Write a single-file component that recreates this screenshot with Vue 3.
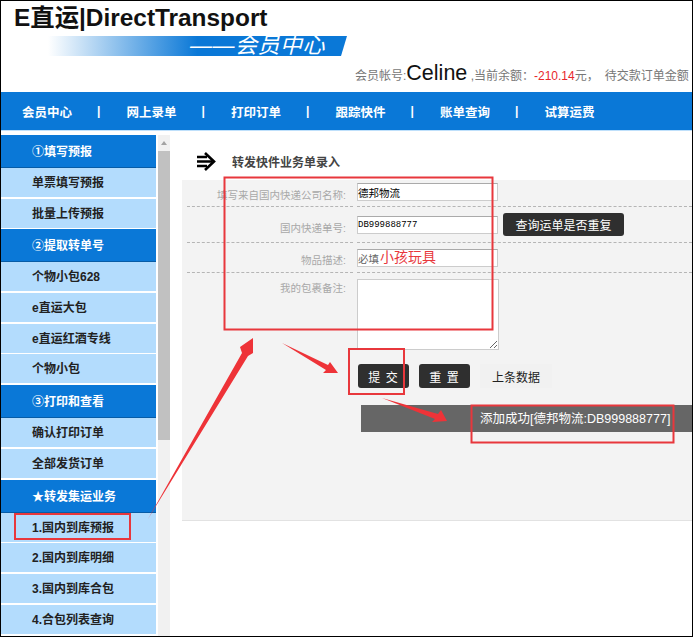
<template>
  <div class="page">
    <header class="top">
      <div class="brand">E直运|DirectTransport</div>
      <div class="banner">——会员中心</div>
      <div class="account">
        会员帐号:<span class="user">Celine</span> ,当前余额：<span class="minus">-210.14</span>元，<span class="due">待交款订单金额</span>
      </div>
    </header>

    <nav class="nav">
      <div v-for="(item, i) in navItems" :key="item" class="nav-item">
        <span class="nav-text">{{ item }}</span>
        <span v-if="i < navItems.length - 1" class="nav-sep">|</span>
      </div>
    </nav>

    <div class="body">
      <aside class="side">
        <template v-for="group in menu" :key="group.title">
          <div class="group">{{ group.title }}</div>
          <div v-for="link in group.links" :key="link" class="link">{{ link }}</div>
        </template>
      </aside>
      <div class="scrollbar">
        <div class="scroll-up"></div>
        <div class="scroll-thumb"></div>
      </div>

      <main class="main">
        <div class="title">
          <svg class="title-icon" width="20" height="19" viewBox="0 0 20 19">
            <path d="M0 5h10M0 9.5h15M0 14h10" fill="none" stroke="#000" stroke-width="2.3" />
            <path d="M8 1l9 8.5-9 8.5" fill="none" stroke="#000" stroke-width="2.6" />
          </svg>
          <span>转发快件业务单录入</span>
        </div>

        <div class="panel">
          <div class="row row-a">
            <label class="label">填写来自国内快递公司名称:</label>
            <div class="field"><input class="input" value="德邦物流" readonly /></div>
          </div>
          <div class="row row-b">
            <label class="label">国内快递单号:</label>
            <div class="field">
              <input class="input mono" value="DB999888777" readonly />
              <button class="btn btn-query">查询运单是否重复</button>
            </div>
          </div>
          <div class="row row-c">
            <label class="label">物品描述:</label>
            <div class="field"><input class="input hint" value="必填" readonly /></div>
          </div>
          <div class="row row-d">
            <label class="label">我的包裹备注:</label>
            <div class="field"><textarea class="area" readonly></textarea></div>
          </div>
          <div class="actions">
            <button class="btn btn-act">提 交</button>
            <button class="btn btn-act">重 置</button>
            <button class="btn-plain">上条数据</button>
          </div>
          <div class="message">添加成功[德邦物流:DB999888777]</div>
        </div>
      </main>
    </div>

    <!-- 截图上的红色标注 -->
    <svg class="marks" width="693" height="637" viewBox="0 0 693 637">
      <g fill="none" stroke="#e8373c" stroke-width="2">
        <rect x="15" y="514" width="115" height="25" />
        <rect x="224.500" y="177.500" width="268" height="152" />
        <rect x="349" y="349" width="55" height="45" />
        <rect x="471.500" y="405.500" width="202" height="37" />
      </g>
      <g fill="#ee3338">
        <polygon points="148,519 242,353 240,347 253,338 253,353 248,356" />
        <polygon points="282,343 328,365 330,362 338,373 323,373 326,370" />
        <polygon points="382,398 438,414 441,410 447,421 432,422 435,419" />
      </g>
    </svg>
    <span class="note">小孩玩具</span>
  </div>
</template>

<script setup>
const navItems = ['会员中心', '网上录单', '打印订单', '跟踪快件', '账单查询', '试算运费']

const menu = [
  { title: '①填写预报', links: ['单票填写预报', '批量上传预报'] },
  { title: '②提取转单号', links: ['个物小包628', 'e直运大包', 'e直运红酒专线', '个物小包'] },
  { title: '③打印和查看', links: ['确认打印订单', '全部发货订单'] },
  { title: '★转发集运业务', links: ['1.国内到库预报', '2.国内到库明细', '3.国内到库合包', '4.合包列表查询'] }
]
</script>

<style>
html, body {
  margin: 0;
  background: #fff;
}
</style>

<style scoped>
.page {
  position: relative;
  width: 693px;
  height: 637px;
  box-sizing: border-box;
  border: 1px solid #000;
  overflow: hidden;
  background: #fff;
  font-family: "Liberation Sans", "Noto Sans CJK SC", sans-serif;
  font-size: 12px;
}
.top {
  height: 91px;
  overflow: hidden;
}
.brand {
  margin: 1px 0 0 13px;
  height: 32px;
  line-height: 32px;
  font-size: 24.4px;
  font-weight: bold;
  color: #111;
  white-space: nowrap;
}
.banner {
  width: 299px;
  height: 20px;
  margin: 2px 0 0 47px;
  box-sizing: border-box;
  padding-left: 142px;
  line-height: 20px;
  font-size: 22px;
  font-style: italic;
  letter-spacing: 0.5px;
  color: #fff;
  background: linear-gradient(90deg, #fff 0%, #0a78d7 50%, #0a78d7 100%);
  clip-path: polygon(0 0, 100% 0, 98% 100%, 0 100%);
  white-space: nowrap;
}
.account {
  margin: 2px 0 0 354px;
  height: 30px;
  line-height: 30px;
  font-size: 12px;
  color: #777;
  white-space: nowrap;
}
.user {
  font-size: 21.500px;
  color: #111;
}
.minus {
  color: #e8262b;
}
.due {
  margin-left: 6px;
}
.nav {
  display: flex;
  height: 38px;
  padding-left: 21px;
  background: #0a78d7;
  color: #fff;
  border-bottom: 1px solid #bfe0fb;
}
.nav-item {
  display: flex;
  align-items: center;
  width: 104.500px;
  flex: none;
}
.nav-text {
  width: 75px;
  font-size: 12.500px;
  font-weight: bold;
  white-space: nowrap;
}
.nav-sep {
  font-weight: bold;
}
.body {
  display: flex;
  padding-top: 4px;
}
.side {
  width: 155px;
  flex: none;
  white-space: nowrap;
}
.group {
  height: 33px;
  box-sizing: border-box;
  padding-left: 31px;
  line-height: 34px;
  font-weight: bold;
  color: #fff;
  background: #0a78d7;
  border-bottom: 1px solid #075ca6;
}
.link {
  height: 29px;
  margin-bottom: 1.700px;
  padding-left: 31px;
  line-height: 31px;
  font-weight: bold;
  color: #222;
  background: #b3dcfd;
}
.scrollbar {
  width: 12px;
  height: 502px;
  flex: none;
  margin-left: 2px;
  background: #f1f1f1;
}
.scroll-up {
  width: 0;
  height: 0;
  margin: 6px auto 6px;
  border: 3.500px solid transparent;
  border-top: 0;
  border-bottom: 4px solid #a3a3a3;
}
.scroll-thumb {
  height: 289px;
  background: #c1c1c1;
}
.main {
  flex: 1;
  min-width: 0;
  margin-left: 12px;
}
.title {
  display: flex;
  align-items: center;
  height: 45px;
  box-sizing: border-box;
  padding: 8px 0 0 15px;
  font-weight: bold;
  color: #444;
}
.title-icon {
  margin-right: 15px;
}
.panel {
  height: 340px;
  padding-left: 5px;
  background: #f3f3f3;
  border-bottom: 1px solid #e2e2e2;
}
.row {
  display: grid;
  grid-template-columns: 166px 1fr;
  column-gap: 4px;
}
.row-a { height: 27px; }
.row-b { height: 36px; }
.row-c { height: 30px; }
.label {
  box-sizing: border-box;
  padding-right: 7px;
  text-align: right;
  font-size: 10.500px;
  color: #a8a8a8;
  white-space: nowrap;
  border-bottom: 1px dashed #b5b5b5;
}
.field {
  display: flex;
  align-items: flex-start;
  border-bottom: 1px dashed #b5b5b5;
}
.row-a .label { padding-top: 7px; }
.row-a .field { padding-top: 3px; }
.row-b .label { padding-top: 13px; }
.row-b .field { padding-top: 9px; }
.row-c .label { padding-top: 9px; }
.row-c .field { padding-top: 6px; }
.row-d .label,
.row-d .field {
  border-bottom: 0;
}
.row-d .label { padding-top: 7px; }
.row-d .field { padding-top: 6px; }
.input {
  width: 141px;
  height: 18px;
  box-sizing: border-box;
  padding: 0;
  border: 1px solid #ccc;
  border-top-color: #aaa;
  background: #fff;
  font-family: inherit;
  font-size: 10.500px;
  color: #000;
  outline: none;
}
.mono {
  font-family: "Liberation Mono", monospace;
  font-size: 9px;
}
.hint {
  color: #666;
}
.area {
  display: block;
  width: 142px;
  height: 71px;
  box-sizing: border-box;
  padding: 0;
  border: 1px solid #ccc;
  background: #fff;
  outline: none;
}
.btn {
  border: 0;
  border-radius: 3px;
  background: #2f2f2f;
  color: #fff;
  font-family: inherit;
  font-size: 12px;
  padding: 0;
}
.btn-query {
  width: 121px;
  height: 23px;
  margin: -3px 0 0 5px;
}
.actions {
  display: flex;
  align-items: center;
  height: 24px;
  margin: 14px 0 0 171px;
}
.btn-act {
  width: 51px;
  height: 24px;
  margin-right: 10px;
  letter-spacing: 1px;
}
.btn-plain {
  width: 72px;
  height: 24px;
  border: 0;
  padding: 0;
  background: #f1f1f1;
  color: #222;
  font-family: inherit;
  font-size: 12px;
}
.message {
  height: 27px;
  margin: 17px 0 0 174px;
  padding-left: 119px;
  line-height: 28px;
  font-size: 12.500px;
  color: #fff;
  background: #666;
  white-space: nowrap;
}
.marks {
  position: absolute;
  left: -1px;
  top: -1px;
  pointer-events: none;
}
.note {
  position: absolute;
  left: 379px;
  top: 247px;
  line-height: 18px;
  font-size: 14px;
  color: #e8373c;
}
</style>
